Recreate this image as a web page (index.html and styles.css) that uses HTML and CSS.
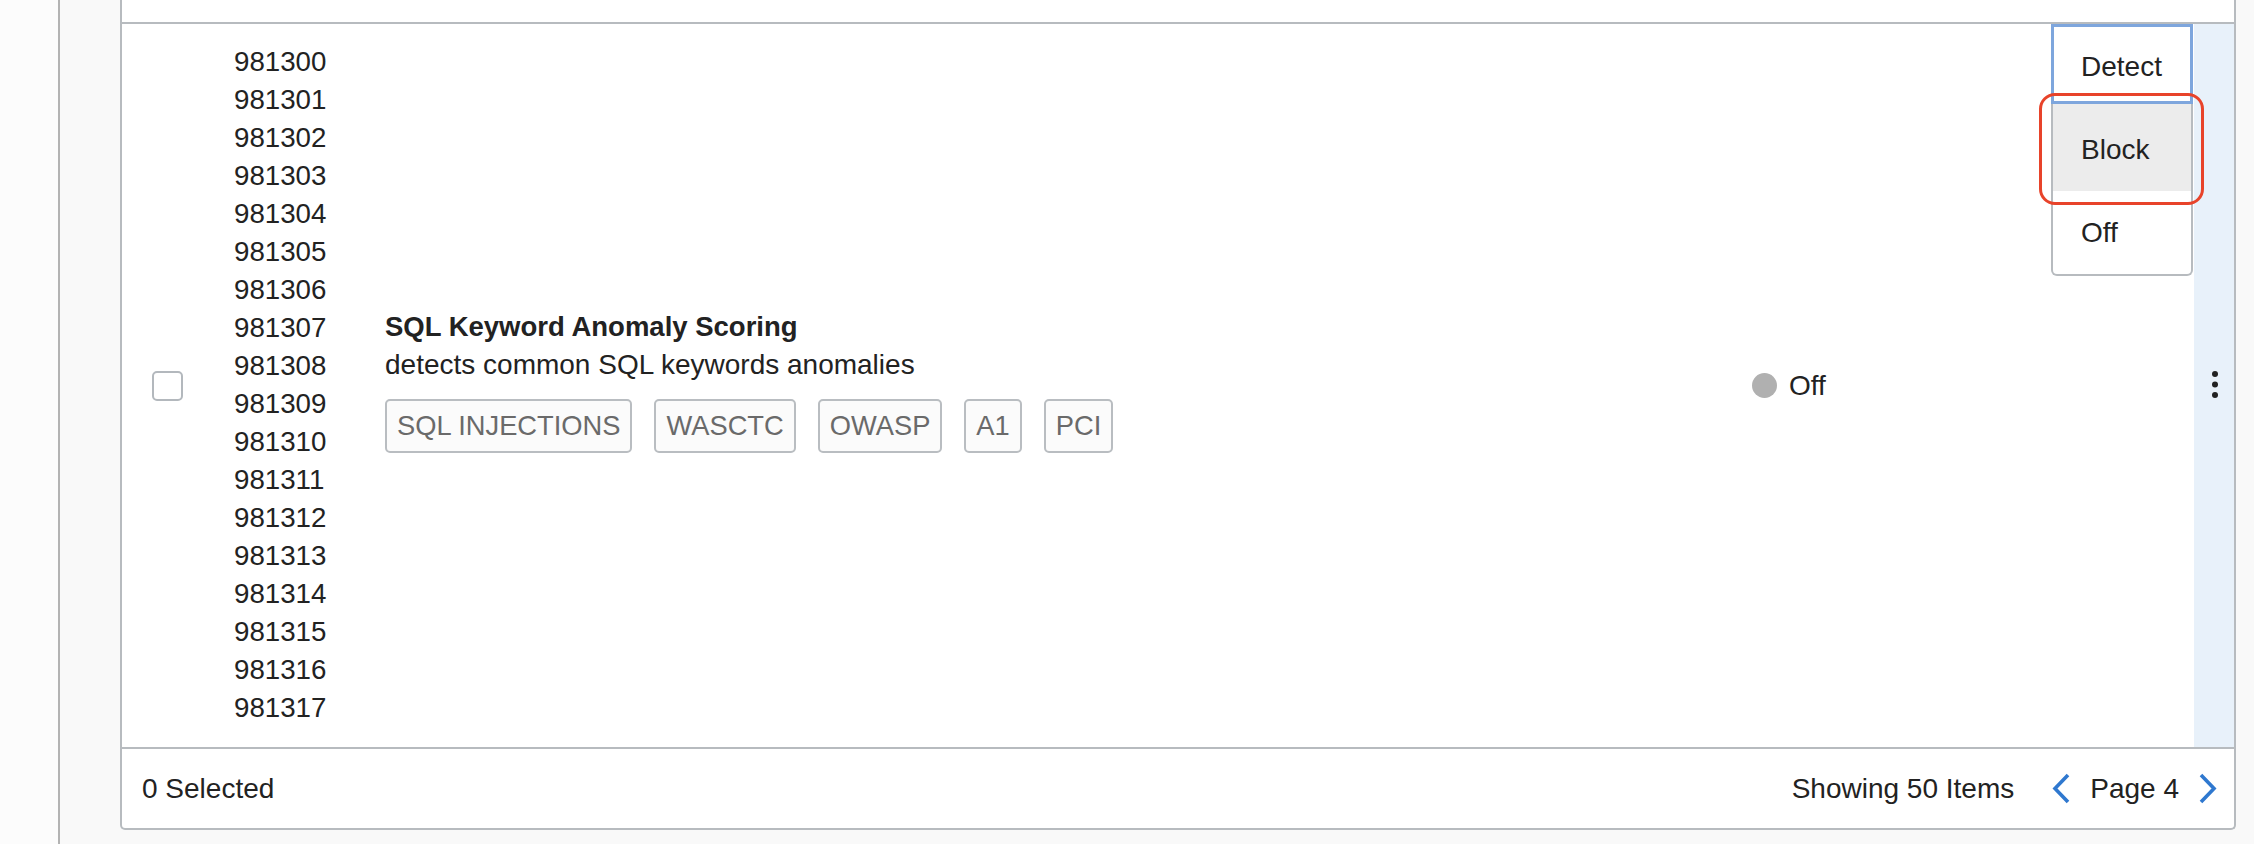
FILE: index.html
```html
<!DOCTYPE html>
<html lang="en">
<head>
<meta charset="utf-8">
<title>Rules</title>
<link rel="stylesheet" href="styles.css">
</head>
<body>
<div class="layout">
  <aside class="sidebar"></aside>
  <main class="main">
    <section class="card">
      <div class="prev-row"></div>
      <div class="row">
        <div class="cell cell-check"><span class="checkbox"></span></div>
        <div class="cell cell-ids">
          <div>981300</div><div>981301</div><div>981302</div><div>981303</div>
          <div>981304</div><div>981305</div><div>981306</div><div>981307</div>
          <div>981308</div><div>981309</div><div>981310</div><div>981311</div>
          <div>981312</div><div>981313</div><div>981314</div><div>981315</div>
          <div>981316</div><div>981317</div>
        </div>
        <div class="cell cell-info">
          <div class="info">
            <div class="title">SQL Keyword Anomaly Scoring</div>
            <div class="desc">detects common SQL keywords anomalies</div>
            <div class="tags">
              <span class="tag">SQL INJECTIONS</span>
              <span class="tag">WASCTC</span>
              <span class="tag">OWASP</span>
              <span class="tag">A1</span>
              <span class="tag">PCI</span>
            </div>
          </div>
        </div>
        <div class="cell cell-status"><span class="dot"></span><span>Off</span></div>
        <div class="cell cell-menu">
          <svg class="kebab" width="6" height="28" viewBox="0 0 6 28"><circle cx="3" cy="3" r="3" fill="#222"/><circle cx="3" cy="13.5" r="3" fill="#222"/><circle cx="3" cy="24" r="3" fill="#222"/></svg>
        </div>
        <div class="dropdown">
          <div class="dd-item dd-focus">Detect</div>
          <div class="dd-item dd-hover">Block</div>
          <div class="dd-item dd-last">Off</div>
          <div class="highlight"></div>
        </div>
      </div>
      <footer class="footer">
        <span>0 Selected</span>
        <div class="pager">
          <span class="showing">Showing 50 Items</span>
          <svg class="chev" width="18" height="31" viewBox="0 0 18 31"><polyline points="16,2 3,15.5 16,29" fill="none" stroke="#2f78cf" stroke-width="3.6"/></svg>
          <span class="page">Page 4</span>
          <svg class="chev" width="18" height="31" viewBox="0 0 18 31"><polyline points="2,2 15,15.5 2,29" fill="none" stroke="#2f78cf" stroke-width="3.6"/></svg>
        </div>
      </footer>
    </section>
  </main>
</div>
</body>
</html>
```

FILE: styles.css
```css
* { box-sizing: border-box; }
html, body { margin: 0; padding: 0; }
body {
  font-family: "Liberation Sans", Arial, Helvetica, sans-serif;
  font-size: 28px;
  color: #222;
  background: #f9f9f9;
  height: 844px;
  overflow: hidden;
}
.layout { display: flex; height: 844px; }
.sidebar {
  width: 60px;
  flex: none;
  background: #fcfcfc;
  border-right: 2px solid #b3b3b3;
}
.main {
  flex: 1;
  padding: 0 18px 0 60px;
}
.card {
  background: #fff;
  border: 2px solid #b7bbbf;
  border-top: none;
  border-radius: 0 0 5px 5px;
}
.prev-row {
  height: 24px;
  border-bottom: 2px solid #b7bbbf;
}
.row {
  position: relative;
  display: grid;
  grid-template-columns: 112px 151px 1fr 442px 40px;
  border-bottom: 2px solid #b7bbbf;
}
.cell { display: flex; align-items: center; }
.cell-check { padding-left: 30px; }
.checkbox {
  width: 31px;
  height: 30px;
  border: 2px solid #b3b8bd;
  border-radius: 5px;
  background: #fff;
}
.cell-ids {
  display: block;
  padding: 19px 0 20px;
  line-height: 38px;
  font-size: 27.7px;
}
.info { padding-bottom: 10px; }
.title { font-weight: bold; line-height: 38px; font-size: 27.5px; }
.desc { line-height: 38px; }
.tags { display: flex; gap: 22px; margin-top: 15px; }
.tag {
  border: 2px solid #b9bdc1;
  border-radius: 5px;
  background: #fbfbfb;
  color: #6a6a6a;
  padding: 8px 10px;
  line-height: 34px;
  font-size: 27.3px;
}
.cell-status { gap: 12px; }
.dot {
  width: 25px;
  height: 25px;
  border-radius: 50%;
  background: #b0b0b0;
}
.cell-menu {
  background: #e8f1fa;
  justify-content: center;
}
.kebab { display: block; margin-left: 2px; margin-top: -2px; }
.dropdown {
  position: absolute;
  top: 0;
  right: 41px;
  width: 142px;
}
.dd-item {
  line-height: 34px;
  background: #fff;
  border-left: 2px solid #b7bbbf;
  border-right: 2px solid #b7bbbf;
  padding: 0 0 0 28px;
}
.dd-focus {
  border: 3px solid #7ea6dd;
  padding: 23px 0 17px 27px;
}
.dd-hover {
  background: #ececec;
  padding-top: 29px;
  padding-bottom: 24px;
}
.dd-last {
  padding-top: 25px;
  padding-bottom: 24px;
  border-bottom: 2px solid #b7bbbf;
  border-radius: 0 0 6px 6px;
}
.highlight {
  position: absolute;
  left: -12px;
  top: 69px;
  width: 165px;
  height: 112px;
  border: 3px solid #e8432a;
  border-radius: 16px;
}
.footer {
  height: 79px;
  display: flex;
  align-items: center;
  justify-content: space-between;
  padding: 0 17px 0 20px;
}
.pager { display: flex; align-items: center; }
.showing { margin-right: 38px; }
.page { margin: 0 20px; }
.chev { display: block; }
```
